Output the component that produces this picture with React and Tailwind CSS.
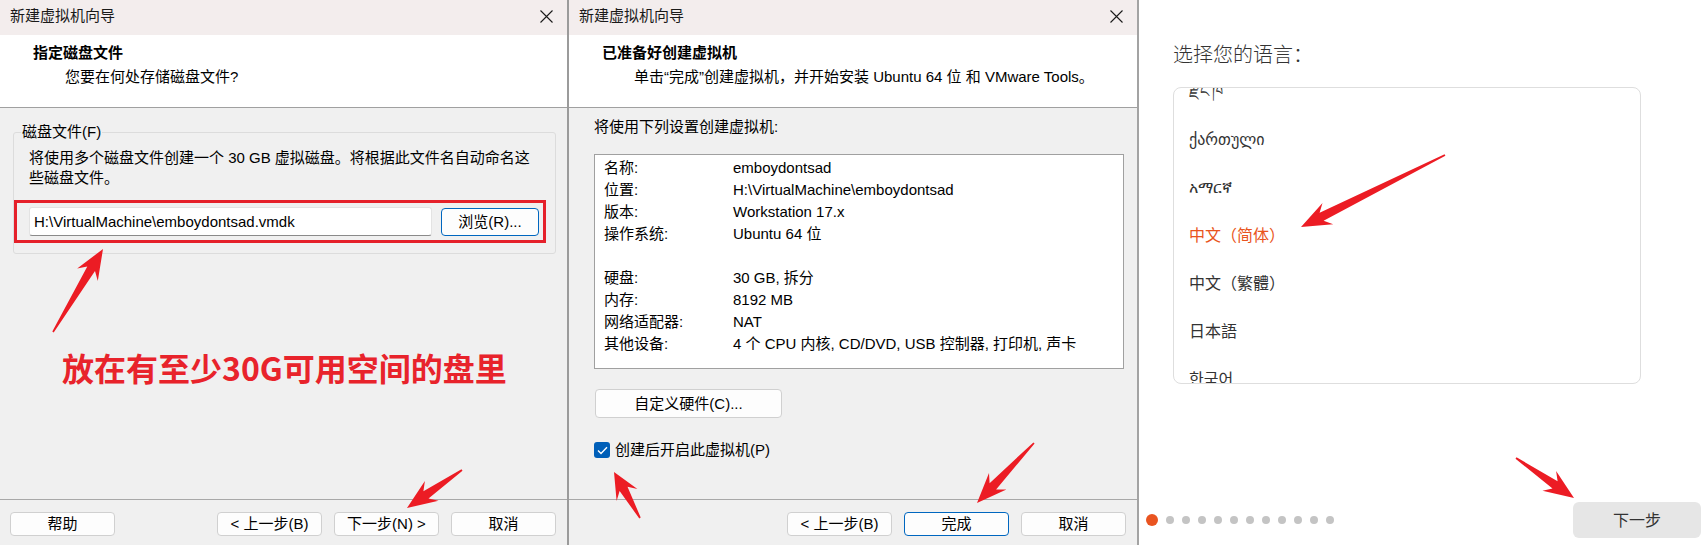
import React from "react";

const ui = "font-['Liberation_Sans','Noto_Sans_CJK_SC',sans-serif]";
const cjk = "font-['Noto_Sans','Noto_Sans_CJK_SC','DejaVu_Sans',sans-serif]";

// red annotation arrows, tail -> tip
const arrows = [
  [53, 332, 103, 249],
  [462, 470, 407, 508],
  [640, 518, 614, 472],
  [1034, 443, 977, 503],
  [1445, 155, 1301, 227],
  [1516, 458, 1574, 498],
];

function arrowPoints([x1, y1, x2, y2]) {
  const dx = x2 - x1;
  const dy = y2 - y1;
  const len = Math.hypot(dx, dy);
  const ux = dx / len;
  const uy = dy / len;
  const nx = -uy;
  const ny = ux;
  const L = Math.min(30, len * 0.5);
  const W = 12;
  const ws = 4.5;
  const wt = 0.8;
  const bx = x2 - ux * L;
  const by = y2 - uy * L;
  const sx = bx + ux * 7;
  const sy = by + uy * 7;
  const pts = [
    [x1 + nx * wt, y1 + ny * wt],
    [sx + nx * ws, sy + ny * ws],
    [bx + nx * W, by + ny * W],
    [x2, y2],
    [bx - nx * W, by - ny * W],
    [sx - nx * ws, sy - ny * ws],
    [x1 - nx * wt, y1 - ny * wt],
  ];
  return pts.map((p) => p.map((v) => v.toFixed(1)).join(",")).join(" ");
}

function TitleBar() {
  return (
    <div className="h-[35px] bg-[#f3eded] flex items-center justify-between pl-[10px] pr-[14px]">
      <span className="text-[15px] leading-[20px] text-[#1a1a1a] -mt-[4px]">新建虚拟机向导</span>
      <svg width="13" height="13" viewBox="0 0 13 13" className="-mt-[3px]">
        <path d="M0.5 0.5L12.5 12.5M12.5 0.5L0.5 12.5" stroke="#1a1a1a" strokeWidth="1.1" />
      </svg>
    </div>
  );
}

function Header({ title, sub }) {
  return (
    <>
      <div className="h-[72px] bg-white pt-[8px] text-black">
        <div className="pl-[33px] text-[15px] leading-[20px] font-bold">{title}</div>
        <div className="pl-[65px] mt-[4px] text-[15px] leading-[20px] whitespace-nowrap">{sub}</div>
      </div>
      <div className="h-px bg-[#a0a0a0]" />
    </>
  );
}

function Btn({ children, primary, className = "" }) {
  return (
    <div
      className={`w-[105px] h-[24px] rounded-[4px] border bg-[#fdfdfd] text-[15px] leading-[20px] text-black flex items-center justify-center whitespace-nowrap ${
        primary ? "border-[#0067c0]" : "border-[#d0d0d0]"
      } ${className}`}
    >
      {children}
    </div>
  );
}

function Footer({ help, finish }) {
  return (
    <>
      <div className="h-px bg-[#a8a8a8]" />
      <div className="h-[45px] bg-[#f0f0f0] pt-[12px] pl-[10px] pr-[11px] flex">
        {help && <Btn>帮助</Btn>}
        <div className="ml-auto flex gap-[12px]">
          <Btn>&lt; 上一步(B)</Btn>
          {finish ? <Btn primary>完成</Btn> : <Btn>下一步(N) &gt;</Btn>}
          <Btn>取消</Btn>
        </div>
      </div>
    </>
  );
}

function DiskPanel() {
  return (
    <div className={`w-[567px] h-[545px] flex flex-col ${ui}`}>
      <TitleBar />
      <Header title="指定磁盘文件" sub="您要在何处存储磁盘文件?" />
      <div className="flex-1 bg-[#f0f0f0] pl-[13px] pr-[11px] flex flex-col text-black">
        <fieldset className="mt-[14px] border border-[#dcdcdc] rounded-[3px] px-[15px] pb-[10px]">
          <legend className="ml-[-8px] px-[1px] text-[15px] leading-[20px]">磁盘文件(F)</legend>
          <div className="mt-[6px] text-[15px] leading-[20px] whitespace-nowrap">
            将使用多个磁盘文件创建一个 30 GB 虚拟磁盘。将根据此文件名自动命名这
          </div>
          <div className="text-[15px] leading-[20px]">些磁盘文件。</div>
          <div className="mt-[12px] ml-[-15px] mr-[-6px] border-[3px] border-[#e5202a] pl-[12px] pr-[4px] py-[4px] flex items-center">
            <div className="w-[403px] h-[29px] bg-white border border-[#e3e3e3] border-b-[#8a8a8a] rounded-[3px] pl-[4px] flex items-center text-[15px] leading-[20px]">
              H:\VirtualMachine\emboydontsad.vmdk
            </div>
            <div className="ml-[9px] w-[98px] h-[28px] rounded-[4px] border border-[#0067c0] bg-[#fdfdfd] flex items-center justify-center text-[15px] leading-[20px]">
              浏览(R)...
            </div>
          </div>
        </fieldset>
        <div className="mt-[93px] ml-[49px] text-[32px] leading-[40px] font-bold text-[#e8232b] font-['Noto_Sans_CJK_SC',sans-serif] whitespace-nowrap">
          放在有至少30G可用空间的盘里
        </div>
      </div>
      <Footer help />
    </div>
  );
}

const rows = [
  ["名称:", "emboydontsad"],
  ["位置:", "H:\\VirtualMachine\\emboydontsad"],
  ["版本:", "Workstation 17.x"],
  ["操作系统:", "Ubuntu 64 位"],
  ["", ""],
  ["硬盘:", "30 GB, 拆分"],
  ["内存:", "8192 MB"],
  ["网络适配器:", "NAT"],
  ["其他设备:", "4 个 CPU 内核, CD/DVD, USB 控制器, 打印机, 声卡"],
];

function SummaryPanel() {
  return (
    <div className={`w-[568px] h-[545px] flex flex-col ${ui}`}>
      <TitleBar />
      <Header
        title="已准备好创建虚拟机"
        sub="单击“完成”创建虚拟机，并开始安装 Ubuntu 64 位 和 VMware Tools。"
      />
      <div className="flex-1 bg-[#f0f0f0] pl-[25px] pr-[13px] pt-[9px] flex flex-col text-black text-[15px]">
        <div className="leading-[20px]">将使用下列设置创建虚拟机:</div>
        <div className="mt-[17px] border border-[#a0a0a0] bg-white pt-[2px] pb-[13px] pl-[9px]">
          {rows.map(([k, v], i) => (
            <div key={i} className="h-[22px] flex items-center leading-[20px] whitespace-nowrap">
              <span className="w-[129px]">{k}</span>
              <span>{v}</span>
            </div>
          ))}
        </div>
        <div className="mt-[20px] ml-[1px] w-[187px] h-[29px] rounded-[4px] border border-[#d0d0d0] bg-[#fdfdfd] flex items-center justify-center leading-[20px]">
          自定义硬件(C)...
        </div>
        <div className="mt-[22px] h-[20px] flex items-center gap-[5px] leading-[20px]">
          <div className="w-[16px] h-[16px] rounded-[3px] bg-[#005fb8] flex items-center justify-center">
            <svg width="11" height="9" viewBox="0 0 11 9">
              <path d="M1 4.6L4 7.4L10 1.3" fill="none" stroke="#fff" strokeWidth="1.4" />
            </svg>
          </div>
          <span>创建后开启此虚拟机(P)</span>
        </div>
      </div>
      <Footer finish />
    </div>
  );
}

const langs = ["རྫོང་ཁ", "ქართული", "አማርኛ", "中文（简体）", "中文（繁體）", "日本語", "한국어"];

function LanguagePanel() {
  return (
    <div className={`w-[569px] h-[545px] bg-white flex flex-col ${cjk}`}>
      <div className="pl-[34px] pt-[41px] text-[20px] leading-[28px] font-light text-[#333]">选择您的语言：</div>
      <div className="ml-[34px] mt-[18px] w-[468px] h-[297px] border border-[#dedede] rounded-[8px] overflow-hidden">
        <div className="-mt-[21px]">
          {langs.map((l) => (
            <div
              key={l}
              className={`h-[48px] flex items-center pl-[15px] text-[16px] leading-[22px] ${
                l === "中文（简体）" ? "text-[#e95420]" : "text-[#333]"
              } font-['Noto_Sans','Noto_Sans_CJK_SC','Noto_Sans_CJK_KR','DejaVu_Sans',sans-serif]`}
            >
              {l}
            </div>
          ))}
        </div>
      </div>
      <div className="mt-auto mb-[7px] h-[36px] pl-[7px] pr-[7px] flex items-center">
        <div className="flex items-center gap-[8px]">
          <div className="w-[12px] h-[12px] rounded-full bg-[#e95420]" />
          {Array.from({ length: 11 }).map((_, i) => (
            <div key={i} className="w-[8px] h-[8px] rounded-full bg-[#c4c4c4]" />
          ))}
        </div>
        <div className="ml-auto w-[128px] h-[36px] rounded-[6px] bg-[#e6e6e6] flex items-center justify-center text-[16px] leading-[22px] text-[#333]">
          下一步
        </div>
      </div>
    </div>
  );
}

export default function App() {
  return (
    <div className="relative w-[1708px] h-[545px] flex overflow-hidden bg-white">
      <DiskPanel />
      <div className="w-[2px] h-[545px] bg-[#9b9b9b]" />
      <SummaryPanel />
      <div className="w-[2px] h-[545px] bg-[#a3a3a3]" />
      <LanguagePanel />
      <svg className="absolute inset-0 pointer-events-none" width="1708" height="545" viewBox="0 0 1708 545">
        {arrows.map((a, i) => (
          <polygon key={i} points={arrowPoints(a)} fill="#ec1c24" />
        ))}
      </svg>
    </div>
  );
}
